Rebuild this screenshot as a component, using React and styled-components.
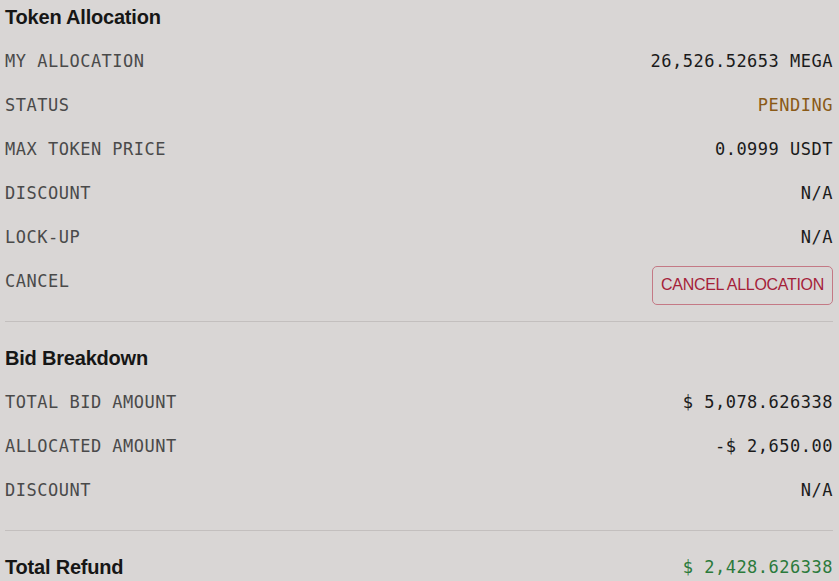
import React from "react";
import styled, { createGlobalStyle } from "styled-components";

const GlobalStyle = createGlobalStyle`
  html, body {
    margin: 0;
    padding: 0;
    background: #d9d6d5;
  }
`;

const Page = styled.div`
  padding: 5px 6px 0 5px;
  background: #d9d6d5;
  min-height: 581px;
  box-sizing: border-box;
`;

const Section = styled.section`
  padding-top: ${props => (props.first ? "0" : "24px")};
`;

const Heading = styled.h2`
  margin: 0 0 ${props => (props.inline ? "0" : "10px")};
  font-family: "Liberation Sans", Arial, sans-serif;
  font-weight: 700;
  font-size: 20px;
  letter-spacing: -0.2px;
  line-height: 24px;
  color: #161616;
`;

const Row = styled.div`
  display: flex;
  justify-content: space-between;
  align-items: center;
  height: ${props => (props.short ? "24px" : "44px")};
`;

const Label = styled.span`
  font-family: "DejaVu Sans Mono", monospace;
  font-size: 17px;
  letter-spacing: 0.5px;
  color: #4a4a4a;
`;

const Value = styled.span`
  font-family: "DejaVu Sans Mono", monospace;
  font-size: 17px;
  letter-spacing: 0.5px;
  color: ${props => props.color || "#1b1b1b"};
`;

const CancelButton = styled.button`
  margin-top: 8px;
  height: 39px;
  padding: 0 8px;
  background: transparent;
  border: 1px solid #c47985;
  border-radius: 5px;
  font-family: "Liberation Sans", Arial, sans-serif;
  font-size: 16px;
  letter-spacing: -0.3px;
  color: #a52139;
  cursor: pointer;
`;

const Divider = styled.hr`
  margin: 18px 0 0;
  border: none;
  border-top: 1px solid #c3bfbe;
  height: 0;
`;

const allocation = [
  { label: "MY ALLOCATION", value: "26,526.52653 MEGA" },
  { label: "STATUS", value: "PENDING", color: "#8a5a17" },
  { label: "MAX TOKEN PRICE", value: "0.0999 USDT" },
  { label: "DISCOUNT", value: "N/A" },
  { label: "LOCK-UP", value: "N/A" }
];

const breakdown = [
  { label: "TOTAL BID AMOUNT", value: "$ 5,078.626338" },
  { label: "ALLOCATED AMOUNT", value: "-$ 2,650.00" },
  { label: "DISCOUNT", value: "N/A" }
];

const App = () => (
  <Page>
    <GlobalStyle />
    <Section first>
      <Heading>Token Allocation</Heading>
      {allocation.map(item => (
        <Row key={item.label}>
          <Label>{item.label}</Label>
          <Value color={item.color}>{item.value}</Value>
        </Row>
      ))}
      <Row>
        <Label>CANCEL</Label>
        <CancelButton>CANCEL ALLOCATION</CancelButton>
      </Row>
    </Section>
    <Divider />
    <Section>
      <Heading>Bid Breakdown</Heading>
      {breakdown.map(item => (
        <Row key={item.label}>
          <Label>{item.label}</Label>
          <Value>{item.value}</Value>
        </Row>
      ))}
    </Section>
    <Divider />
    <Section>
      <Row short>
        <Heading as="div" inline>Total Refund</Heading>
        <Value color="#2b7a3b">$ 2,428.626338</Value>
      </Row>
    </Section>
  </Page>
);

export default App;
